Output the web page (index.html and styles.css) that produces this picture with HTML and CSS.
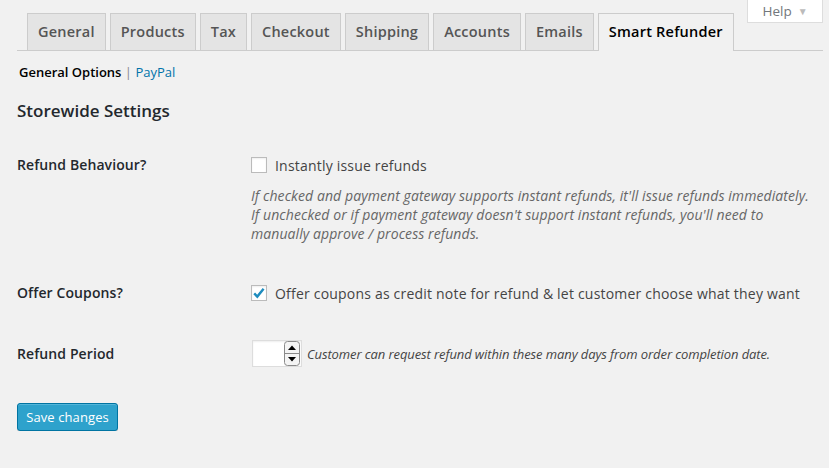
FILE: index.html
```html
<!DOCTYPE html>
<html>
<head>
<meta charset="utf-8">
<link rel="stylesheet" href="styles.css">
</head>
<body>
<div class="wrap">
  <nav class="tabs">
    <a class="tab first">General</a>
    <a class="tab">Products</a>
    <a class="tab">Tax</a>
    <a class="tab">Checkout</a>
    <a class="tab">Shipping</a>
    <a class="tab">Accounts</a>
    <a class="tab">Emails</a>
    <a class="tab active">Smart Refunder</a>
    <span class="spacer"></span>
    <a class="help">Help <span class="help-arrow">&#9660;</span></a>
  </nav>

  <div class="subsub"><span class="current">General Options</span> <span class="sep">|</span> <a class="sublink">PayPal</a></div>

  <h2 class="section-title">Storewide Settings</h2>

  <div class="row row-first">
    <div class="label">Refund Behaviour?</div>
    <div class="field">
      <div class="check-line"><span class="checkbox"></span><span class="check-text">Instantly issue refunds</span></div>
      <p class="desc">If checked and payment gateway supports instant refunds, it'll issue refunds immediately.<br>If unchecked or if payment gateway doesn't support instant refunds, you'll need to<br>manually approve / process refunds.</p>
    </div>
  </div>

  <div class="row row-second">
    <div class="label">Offer Coupons?</div>
    <div class="field">
      <div class="check-line"><span class="checkbox"><svg class="tick" width="14" height="14" viewBox="0 0 14 14"><path d="M2.2 7.4 L5.3 10.6 L11.6 2.8" fill="none" stroke="#1e8cbe" stroke-width="2.4" stroke-linecap="butt" stroke-linejoin="miter"/></svg></span><span class="check-text">Offer coupons as credit note for refund &amp; let customer choose what they want</span></div>
    </div>
  </div>

  <div class="row row-third">
    <div class="label">Refund Period</div>
    <div class="field number-line">
      <span class="number">
        <span class="number-value"></span>
        <span class="spin">
          <svg width="16" height="25" viewBox="0 0 16 25">
            <rect x="0.5" y="0.5" width="15" height="24" rx="3" ry="3" fill="#f4f4f4" stroke="#8a8a8a"/>
            <line x1="1" y1="12.5" x2="15" y2="12.5" stroke="#8a8a8a"/>
            <path d="M4 9 L8 4.5 L12 9 Z" fill="#000"/>
            <path d="M4 16 L8 20.5 L12 16 Z" fill="#000"/>
          </svg>
        </span>
      </span>
      <span class="desc-small">Customer can request refund within these many days from order completion date.</span>
    </div>
  </div>

  <div class="actions"><button class="btn-primary">Save changes</button></div>
</div>
</body>
</html>
```
FILE: styles.css
```css
html, body {
  margin: 0;
  padding: 0;
  background: #f1f1f1;
}
body {
  font-family: "Open Sans", "Liberation Sans", sans-serif;
  color: #444;
  font-size: 13px;
}
.wrap {
  padding: 0 6px 0 17px;
}
.tabs {
  display: flex;
  align-items: flex-end;
  height: 50px;
  border-bottom: 1px solid #ccc;
}
.tab {
  display: block;
  margin-left: 4px;
  padding: 6px 10px 6px;
  line-height: 24px;
  font-size: 14.5px;
  letter-spacing: 0.22px;
  font-weight: 600;
  color: #555;
  background: #e4e4e4;
  border: 1px solid #ccc;
  border-bottom: none;
  white-space: nowrap;
}
.tab.first {
  margin-left: 10px;
}
.tab.active {
  background: #f1f1f1;
  color: #000;
  margin-bottom: -1px;
  padding-bottom: 7px;
}
.spacer {
  flex: 1;
}
.help {
  align-self: flex-start;
  width: 74px;
  height: 22px;
  margin-bottom: auto;
  background: #fff;
  border: 1px solid #ddd;
  border-top: none;
  box-sizing: content-box;
  display: flex;
  align-items: center;
  justify-content: center;
  gap: 6px;
  font-size: 13.5px;
  color: #72777c;
  line-height: 22px;
}
.help-arrow {
  font-size: 10px;
  color: #bbb;
}
.subsub {
  margin-top: 8px;
  padding-left: 2px;
  line-height: 26px;
  font-size: 13px;
  color: #aaa;
}
.subsub .current {
  color: #000;
  font-weight: 600;
}
.sep {
  color: #888;
  margin: 0;
}
.sublink {
  color: #0073aa;
}
.section-title {
  margin: 14px 0 0;
  font-size: 17px;
  line-height: 24px;
  font-weight: 600;
  color: #23282d;
}
.row {
  display: grid;
  grid-template-columns: 234px 1fr;
}
.row-first { margin-top: 30px; }
.row-second { margin-top: 38px; }
.row-third { margin-top: 35px; }
.label {
  font-size: 14px;
  letter-spacing: 0.1px;
  font-weight: 600;
  color: #23282d;
  line-height: 24px;
}
.row-third .label {
  padding-top: 2px;
}
.check-line {
  display: flex;
  align-items: center;
  height: 24px;
}
.checkbox {
  width: 14px;
  height: 14px;
  border: 1px solid #bbb;
  background: #fff;
  box-shadow: inset 0 1px 2px rgba(0,0,0,.07);
  margin-right: 8px;
  display: flex;
  align-items: center;
  justify-content: center;
  flex: none;
}
.check-text {
  font-size: 14px;
  letter-spacing: 0.2px;
  color: #444;
}
.desc {
  margin: 9px 0 0;
  font-size: 14px;
  letter-spacing: 0.08px;
  line-height: 19px;
  font-style: italic;
  color: #666;
}
.number-line {
  display: flex;
  align-items: center;
}
.number {
  margin-left: 1px;
  display: flex;
  align-items: center;
  width: 48px;
  height: 25px;
  border: 1px solid #ddd;
  background: #fff;
  box-shadow: inset 0 1px 2px rgba(0,0,0,.07);
}
.number-value {
  flex: 1;
}
.spin {
  display: flex;
  margin-right: 1px;
}
.spin svg {
  display: block;
}
.desc-small {
  margin-left: 5px;
  font-size: 13px;
  letter-spacing: -0.1px;
  font-style: italic;
  color: #444;
}
.actions {
  margin-top: 36px;
}
.btn-primary {
  font-family: "Open Sans", "Liberation Sans", sans-serif;
  font-size: 13px;
  letter-spacing: 0.1px;
  height: 28px;
  width: 101px;
  padding: 0 0 1px;
  color: #fff;
  background: #2ea2cc;
  border: 1px solid #0074a2;
  border-radius: 3px;
  box-shadow: inset 0 1px 0 rgba(120,200,230,.5), 0 1px 0 rgba(0,0,0,.15);
  line-height: 26px;
}
```
